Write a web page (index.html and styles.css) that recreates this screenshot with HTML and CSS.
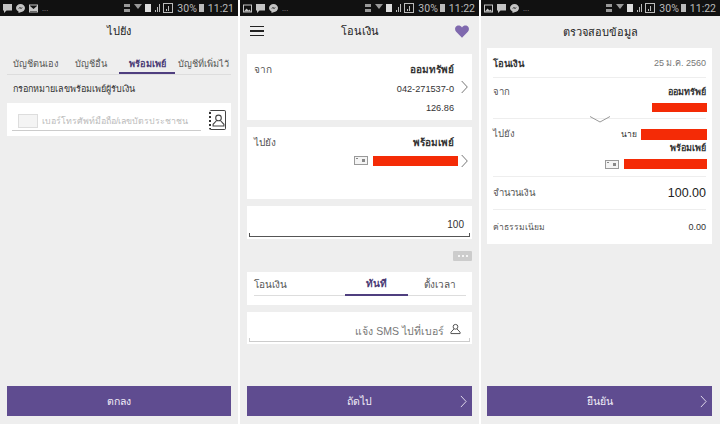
FILE: index.html
```html
<!DOCTYPE html>
<html>
    <head>
        <meta charset="utf-8">
        <title>โอนเงิน</title>
        <link rel="stylesheet" href="styles.css">
    </head>
    <body>
        <svg class="defs" width="0" height="0">
            <symbol id="chevron" viewBox="0 0 7 14"><path d="M.7 1l5.600 6-5.600 6" fill="none" stroke="currentColor" stroke-width="1"/></symbol>
            <symbol id="card" viewBox="0 0 14 9"><rect x=".5" y=".5" width="13" height="8" fill="#f4f4f4" stroke="#999"/><rect x="8" y="3" width="3" height="3" fill="#888"/><rect x="2" y="2" width="2" height="1" fill="#888"/></symbol>
            <symbol id="person" viewBox="0 0 12 12"><circle cx="6" cy="3.600" r="2.600" fill="none" stroke="currentColor"/><path d="M4.300 6L1 9.500V11h10V9.500L7.700 6" fill="none" stroke="currentColor"/></symbol>
            <symbol id="bubble" viewBox="0 0 9 9"><path d="M0 0h9v6.500H3.500L1 9V6.500H0z" fill="currentColor"/></symbol>
            <symbol id="messenger" viewBox="0 0 9 9"><path d="M4.500 0C7 0 9 1.800 9 4.100S7 8.200 4.500 8.200L2.500 9V7.600C1 6.900 0 5.600 0 4.100 0 1.800 2 0 4.500 0z" fill="currentColor"/><path d="M2 5l2-2 1 1 2-1-2 2-1-1z" fill="#111"/></symbol>
            <symbol id="mail" viewBox="0 0 9 9"><rect x=".5" y="1" width="8" height="7" fill="none" stroke="currentColor"/><path d="M1 2l3.500 3L8 2v5H1z" fill="currentColor"/></symbol>
            <symbol id="picture" viewBox="0 0 9 9"><rect x=".5" y="1" width="8" height="7" fill="none" stroke="currentColor"/><path d="M1 7.500l2.500-3 2 2 1-1 1.500 2z" fill="currentColor"/></symbol>
            <symbol id="signal" viewBox="0 0 52 10">
                <path d="M1 1h6v3H1zM1 6h6v3H1z" fill="#999"/>
                <path d="M11 1h8l-4 5z" fill="#999"/><rect x="22" y="1" width="6" height="8" fill="#ddd"/>
                <path d="M32 9h1V7h-1zM34 9h1V4h-1zM36 9h1V1h-1z" fill="#bbb"/>
                <rect x="40.500" y=".5" width="9" height="9" fill="none" stroke="#bbb"/><path d="M43 8h1V6h-1zM45 8h1V3h-1z" fill="#bbb"/>
            </symbol>
        </svg>

        <section class="phone phone-first">
            <div class="status">
                <span class="notif"><svg><use href="#bubble"/></svg><svg><use href="#messenger"/></svg><svg><use href="#mail"/></svg>...</span>
                <span class="status-right"><svg class="status-icons"><use href="#signal"/></svg>30%<b class="batt"></b>11:21</span>
            </div>
            <h1 class="title title-first">ไปยัง</h1>
            <div class="tabs">
                <span class="tab">บัญชีตนเอง</span>
                <span class="tab">บัญชีอื่น</span>
                <span class="tab tab-on">พร้อมเพย์</span>
                <span class="tab">บัญชีที่เพิ่มไว้</span>
            </div>
            <p class="hint">กรอกหมายเลขพร้อมเพย์ผู้รับเงิน</p>
            <div class="card lookup">
                <div class="lookup-field">
                    <span class="lookup-box"></span>
                    <span class="lookup-text">เบอร์โทรศัพท์มือถือ/เลขบัตรประชาชน</span>
                </div>
                <span class="book">
                    <svg class="book-person"><use href="#person"/></svg>
                </span>
            </div>
            <div class="action"><span>ตกลง</span></div>
        </section>

        <section class="phone">
            <div class="status">
                <span class="notif"><svg><use href="#picture"/></svg><svg><use href="#bubble"/></svg><svg><use href="#messenger"/></svg>...</span>
                <span class="status-right"><svg class="status-icons"><use href="#signal"/></svg>30%<b class="batt"></b>11:22</span>
            </div>
            <div class="title title-bar">
                <span class="burger"><i></i><i></i><i></i></span>
                <h1>โอนเงิน</h1>
                <svg class="heart" viewBox="0 0 16 14"><path d="M8 14L1.300 7.200C-.6 5.200-.2 2 2 .8 4-.3 6.500.3 8 2.400 9.500.3 12-.3 14 .8c2.200 1.200 2.600 4.400.7 6.400z"/></svg>
            </div>
            <div class="card from">
                <div class="row-main">
                    <span class="label">จาก</span>
                    <div class="values">
                        <strong>ออมทรัพย์</strong>
                        <span>042-271537-0</span>
                        <span>126.86</span>
                    </div>
                </div>
                <svg class="chev"><use href="#chevron"/></svg>
            </div>
            <div class="card to">
                <div class="row-main">
                    <span class="label">ไปยัง</span>
                    <div class="values">
                        <strong>พร้อมเพย์</strong>
                        <span class="id-row"><svg class="id-card"><use href="#card"/></svg><b class="redact redact-to"></b></span>
                    </div>
                </div>
                <svg class="chev"><use href="#chevron"/></svg>
            </div>
            <div class="card amount"><div class="amount-line">100</div></div>
            <div class="more"><span class="more-btn"><i></i><i></i><i></i></span></div>
            <div class="card when">
                <div class="when-line">
                    <span class="when-label">โอนเงิน</span>
                    <span class="when-now">ทันที</span>
                    <span class="when-later">ตั้งเวลา</span>
                </div>
            </div>
            <div class="card sms">
                <div class="sms-line">แจ้ง SMS ไปที่เบอร์<svg class="sms-person"><use href="#person"/></svg></div>
            </div>
            <div class="action"><span>ถัดไป</span><svg class="action-chev"><use href="#chevron"/></svg></div>
        </section>

        <section class="phone phone-last">
            <div class="status">
                <span class="notif"><svg><use href="#picture"/></svg><svg><use href="#bubble"/></svg><svg><use href="#messenger"/></svg>...</span>
                <span class="status-right"><svg class="status-icons"><use href="#signal"/></svg>30%<b class="batt"></b>11:22</span>
            </div>
            <h1 class="title title-last">ตรวจสอบข้อมูล</h1>
            <div class="card review">
                <div class="rev rev-head">
                    <strong>โอนเงิน</strong>
                    <span class="rev-date">25 ม.ค. 2560</span>
                </div>
                <div class="rev rev-from">
                    <span class="label">จาก</span>
                    <div class="values">
                        <strong>ออมทรัพย์</strong>
                        <b class="redact redact-from"></b>
                    </div>
                    <svg class="down" viewBox="0 0 20 7"><path d="M0 .5L10 6 20 .5" fill="none" stroke="#999"/></svg>
                </div>
                <div class="rev rev-to">
                    <span class="label">ไปยัง</span>
                    <div class="values">
                        <span class="id-row">นาย<b class="redact redact-name"></b></span>
                        <strong>พร้อมเพย์</strong>
                        <span class="id-row id-row-last"><svg class="id-card"><use href="#card"/></svg><b class="redact redact-id"></b></span>
                    </div>
                </div>
                <div class="rev rev-amount">
                    <span class="label">จำนวนเงิน</span>
                    <span class="big">100.00</span>
                </div>
                <div class="rev rev-fee">
                    <span class="label">ค่าธรรมเนียม</span>
                    <span class="fee">0.00</span>
                </div>
            </div>
            <div class="action"><span>ยืนยัน</span><svg class="action-chev"><use href="#chevron"/></svg></div>
        </section>
    </body>
</html>
```

FILE: styles.css
```css
/* Overall */

* {
    box-sizing: border-box;
}

html, body {
    padding: 0;
    margin: 0;
}

body {
    width: 720px;
    height: 424px;
    background: #FFF;
    color: #333;
    display: flex;
    gap: 2px;
    font-family: "Liberation Sans", "Noto Sans", "DejaVu Sans", sans-serif;
    font-size: 10px;
    overflow: hidden;
}

h1, p {
    margin: 0;
    font-weight: 400;
}

.defs {
    position: absolute;
}

.phone {
    width: 239px;
    height: 424px;
    background: #EEE;
    display: flex;
    flex-direction: column;
    position: relative;
}

.phone-first {
    width: 238px;
}

/* Status bar */

.status {
    height: 16px;
    flex: none;
    background: #111;
    color: #BBB;
    display: flex;
    justify-content: space-between;
    align-items: center;
    padding: 0 4px 0 3px;
    font-family: Roboto, sans-serif;
    font-size: 10.500px;
}

.notif {
    display: flex;
    align-items: center;
    gap: 4px;
    color: #999;
    font-size: 8px;
}

.notif svg {
    width: 9px;
    height: 9px;
    color: #C4C4C4;
}

.status-right {
    display: flex;
    align-items: center;
}

.status-icons {
    width: 52px;
    height: 10px;
    margin-right: 2px;
}

.batt {
    width: 5px;
    height: 8px;
    background: #BBB;
    margin: 0 4px 0 2px;
}

/* Titles */

.title {
    flex: none;
    font-size: 11px;
    color: #222;
    text-align: center;
}

.title-first {
    height: 30px;
    line-height: 30px;
}

.title-bar {
    height: 30px;
    margin-bottom: 8px;
    padding: 0 10px;
    display: flex;
    justify-content: space-between;
    align-items: center;
}

.title-bar h1 {
    font-size: 11px;
}

.title-last {
    height: 32px;
    line-height: 32px;
}

.burger {
    width: 14px;
    display: flex;
    flex-direction: column;
    gap: 3px;
}

.burger i {
    height: 1.500px;
    background: #222;
}

.heart {
    width: 14px;
    height: 13px;
    fill: #7F69AE;
}

/* Tabs */

.tabs {
    margin: 5px 7px 0;
    height: 24px;
    display: flex;
    border-bottom: 1px solid #DDD;
    font-size: 9.200px;
}

.tab {
    flex: 1;
    text-align: center;
    line-height: 26px;
    color: #555;
    white-space: nowrap;
}

.tab-on {
    flex: none;
    width: 56px;
    color: #4A3A75;
    font-weight: 700;
    border-bottom: 2px solid #4F3F7F;
}

.hint {
    margin: 7px 0 0 13px;
    font-size: 9px;
    line-height: 14px;
}

/* Cards */

.card {
    flex: none;
    margin: 0 7px;
    background: #FFF;
}

.phone-last .card, .phone-last .action {
    margin-left: 6px;
    margin-right: 8px;
}

.lookup {
    margin-top: 7px;
    height: 33px;
    padding: 1px 5px 0;
    display: flex;
    gap: 8px;
}

.lookup-field {
    flex: 1;
    height: 27px;
    padding: 10px 6px 0;
    display: flex;
    gap: 4px;
    border-bottom: 1px solid #CCC;
}

.lookup-box {
    width: 20px;
    height: 14px;
    border: 1px solid #DDD;
    background: #F4F4F4;
}

.lookup-text {
    color: #BBB;
    font-size: 8.800px;
    line-height: 14px;
    white-space: nowrap;
}

.book {
    width: 17px;
    height: 20px;
    margin-top: 6px;
    flex: none;
    color: #444;
    border: 1px solid #444;
    border-left: 2px dotted #333;
    border-radius: 2px;
    display: flex;
    align-items: center;
    justify-content: center;
}

.book-person {
    width: 13px;
    height: 13px;
}

.from, .to {
    display: flex;
    padding: 9px 4px 0 7px;
    gap: 7px;
}

.from {
    height: 66px;
}

.to {
    height: 72px;
    margin-top: 7px;
}

.row-main {
    flex: 1;
    display: flex;
    justify-content: space-between;
}

.label {
    color: #555;
    font-size: 9.500px;
    line-height: 14px;
}

.from .label, .to .label {
    font-size: 10px;
}

.values {
    display: flex;
    flex-direction: column;
    align-items: flex-end;
    margin-top: -3px;
    font-size: 9.200px;
    line-height: 19.500px;
}

.values strong {
    font-size: 10px;
    color: #333;
}

.chev {
    width: 7px;
    height: 14px;
    flex: none;
    color: #777;
    margin-top: 17px;
}

.to .chev {
    margin-top: 18px;
}

.id-row {
    display: flex;
    align-items: center;
    gap: 5px;
}

.to .id-row {
    margin-top: 3px;
}

.id-card {
    width: 14px;
    height: 9px;
}

.redact {
    display: block;
    background: #F42B06;
}

.redact-to {
    width: 85px;
    height: 10px;
    margin-right: -4px;
}

.amount {
    margin-top: 7px;
    height: 33px;
    padding: 0 2px;
}

.amount-line {
    height: 31px;
    padding: 12px 6px 0 0;
    text-align: right;
    font-size: 10px;
    line-height: 14px;
    border-bottom: 1px solid #555;
    background:
        linear-gradient(#555, #555) left bottom / 1px 3px no-repeat,
        linear-gradient(#555, #555) right bottom / 1px 3px no-repeat;
}

.more {
    flex: none;
    height: 33px;
    padding: 12px 7px 0 0;
    display: flex;
    justify-content: flex-end;
}

.more-btn {
    width: 19px;
    height: 10px;
    border-radius: 1px;
    background: #CCC;
    display: flex;
    align-items: center;
    justify-content: center;
    gap: 2px;
}

.more-btn i {
    width: 2px;
    height: 2px;
    background: #F4F4F4;
}

.when {
    height: 33px;
    padding: 0 6px 0 7px;
}

.when-line {
    height: 24px;
    display: flex;
    align-items: center;
    border-bottom: 1px solid #DDD;
    font-size: 10px;
}

.when-label {
    width: 91px;
    padding-top: 2px;
    color: #555;
}

.when-now {
    width: 63px;
    height: 24px;
    line-height: 24px;
    text-align: center;
    font-weight: 700;
    color: #4A3A75;
    border-bottom: 2px solid #4F3F7F;
}

.when-later {
    flex: 1;
    padding: 2px 0 0 5px;
    text-align: center;
    color: #555;
}

.sms {
    margin-top: 7px;
    height: 32px;
    padding: 0 2px;
}

.sms-line {
    height: 30px;
    padding: 9px 9px 0 0;
    display: flex;
    justify-content: flex-end;
    align-items: center;
    gap: 6px;
    color: #777;
    font-size: 10.500px;
    border-bottom: 1px solid #CCC;
    background:
        linear-gradient(#CCC, #CCC) left bottom / 1px 3px no-repeat,
        linear-gradient(#CCC, #CCC) right bottom / 1px 3px no-repeat;
}

.sms-person {
    width: 11px;
    height: 12px;
    margin-top: -4px;
    color: #444;
}

/* Review */

.review {
    height: 196px;
    padding: 0 6px;
}

.rev {
    display: flex;
    justify-content: space-between;
    border-bottom: 1px solid #EEE;
}

.rev:last-child {
    border-bottom: 0;
}

.rev .values {
    margin-top: 0;
    line-height: 14px;
}

.rev .values strong {
    font-size: 9px;
}

.rev-head {
    height: 30px;
    padding-top: 1px;
    align-items: center;
    font-size: 9.500px;
}

.rev-date {
    color: #777;
    font-size: 9px;
}

.rev-from {
    height: 41px;
    padding-top: 7px;
    position: relative;
}

.redact-from {
    width: 55px;
    height: 9px;
    margin: 4px -1px 0 0;
}

.down {
    position: absolute;
    left: 97px;
    bottom: -5px;
    width: 20px;
    height: 7px;
}

.rev-to {
    height: 58px;
    padding-top: 8px;
}

.rev-to .id-row {
    font-size: 8.500px;
    gap: 4px;
}

.rev-to .id-row-last {
    margin-top: 4px;
    gap: 5px;
}

.redact-name {
    width: 66px;
    height: 11px;
    margin-right: -1px;
}

.redact-id {
    width: 83px;
    height: 10px;
    margin-right: -1px;
}

.rev-amount {
    height: 33px;
    align-items: center;
}

.big {
    font-size: 12.500px;
    color: #222;
}

.rev-fee {
    height: 33px;
    align-items: center;
}

.rev-fee .label {
    font-size: 8.500px;
}

.fee {
    font-size: 9px;
}

/* Bottom button */

.action {
    flex: none;
    margin: auto 7px 8px;
    height: 30px;
    background: #5F4C90;
    color: #F2EEF8;
    display: flex;
    align-items: center;
    justify-content: center;
    font-size: 10.500px;
    position: relative;
}

.action-chev {
    position: absolute;
    right: 5px;
    top: 9px;
    width: 7px;
    height: 13px;
    color: #E8E2F2;
}
```
